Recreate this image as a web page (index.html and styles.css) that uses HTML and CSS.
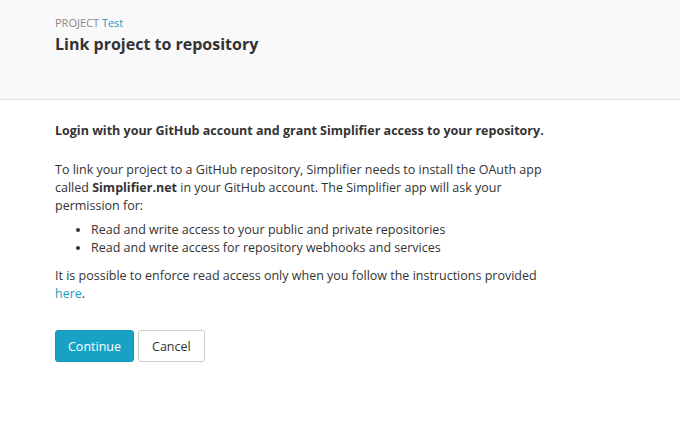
FILE: index.html
```html
<!DOCTYPE html>
<html>
<head>
<meta charset="utf-8">
<link rel="stylesheet" href="styles.css">
</head>
<body>
<header class="page-header">
  <div class="crumb">PROJECT <a href="#" class="link">Test</a></div>
  <h1 class="title">Link project to repository</h1>
</header>
<main class="content">
  <p class="lead">Login with your GitHub account and grant Simplifier access to your repository.</p>
  <p class="text">To link your project to a GitHub repository, Simplifier needs to install the OAuth app called <strong>Simplifier.net</strong> in your GitHub account. The Simplifier app will ask your permission for:</p>
  <ul class="list">
    <li>Read and write access to your public and private repositories</li>
    <li>Read and write access for repository webhooks and services</li>
  </ul>
  <p class="text">It is possible to enforce read access only when you follow the instructions provided <a href="#" class="link">here</a>.</p>
  <div class="actions">
    <button class="btn btn-primary">Continue</button>
    <button class="btn btn-default">Cancel</button>
  </div>
</main>
</body>
</html>
```
FILE: styles.css
```css
html, body {
  margin: 0;
  padding: 0;
  background: #fff;
  font-family: "Open Sans", "Liberation Sans", sans-serif;
  color: #333;
  font-size: 12.5px;
  line-height: 18px;
}
.page-header {
  background: #f9f9f9;
  border-bottom: 1px solid #e0e0e0;
  height: 100px;
  box-sizing: border-box;
  padding: 15px 55px 0;
}
.crumb {
  font-size: 11px;
  line-height: 16px;
  color: #888;
}
.link {
  color: #1a9cc0;
  text-decoration: none;
}
.title {
  margin: 2px 0 0;
  font-size: 16px;
  line-height: 22px;
  font-weight: 700;
  color: #333;
}
.content {
  padding: 22px 55px 0;
  width: 495px;
}
.lead {
  font-weight: 700;
  margin: 0 0 21px;
}
.text {
  margin: 0 0 6px;
}
.list {
  margin: 0 0 10px;
  padding-left: 36px;
}
.actions {
  margin-top: 27px;
  display: flex;
  gap: 4px;
}
.btn {
  font-family: inherit;
  font-size: 12.5px;
  height: 32px;
  padding: 0 12px;
  border-radius: 3px;
  cursor: pointer;
}
.btn-primary {
  background: #17a2c5;
  border: 1px solid #1597b8;
  color: #fff;
}
.btn-default {
  background: #fff;
  border: 1px solid #ccc;
  color: #333;
  padding: 0 13px;
}
```
